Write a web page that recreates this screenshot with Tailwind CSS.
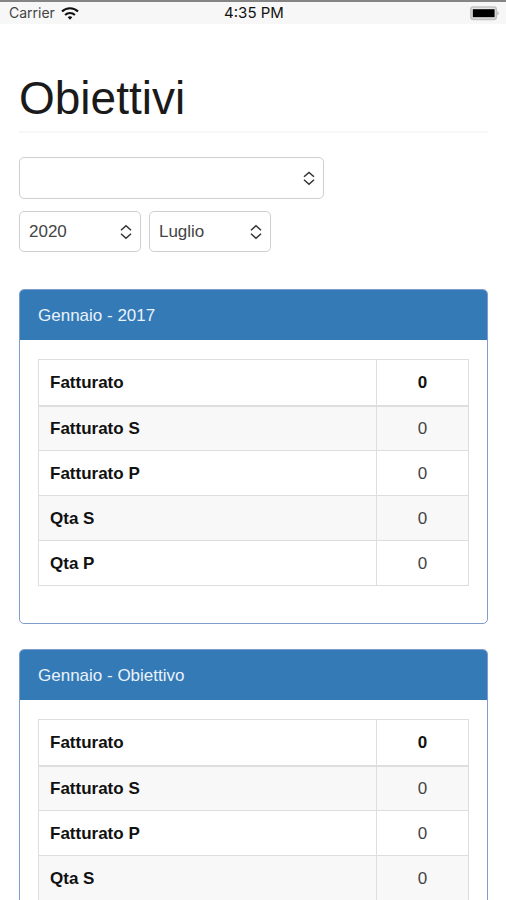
<!DOCTYPE html>
<html lang="it">
<head>
<meta charset="utf-8">
<meta name="viewport" content="width=device-width, initial-scale=1">
<title>Obiettivi</title>
<script src="https://cdn.jsdelivr.net/npm/@tailwindcss/browser@4"></script>
</head>
<body class="bg-white font-['Liberation_Sans',Arial,sans-serif] text-[17px] leading-6 text-[#222]">
<div class="grid h-6 grid-cols-3 items-center border-t-2 border-[#858585] bg-[#f7f7f7] pr-[7px] pl-[9px] font-[Inter,sans-serif] text-sm leading-5 text-[#444]">
  <div class="flex items-center gap-1.5">
    <span>Carrier</span>
    <svg class="h-[13px] w-[18px]" viewBox="0 0 18 13" fill="none" stroke="#111" stroke-width="2.1" aria-hidden="true">
      <path d="M1 4.6C5.4.1 12.6.1 17 4.6"/>
      <path d="M4.1 8C6.8 5.3 11.2 5.3 13.9 8"/>
      <path d="M6.7 10.2C8 8.9 10 8.9 11.3 10.2L9 12.7Z" fill="#111" stroke="none"/>
    </svg>
  </div>
  <div class="text-center text-[15px] leading-5 text-[#111]">4:35 PM</div>
  <svg class="h-[15px] w-[29px] justify-self-end" viewBox="0 0 29 15" aria-hidden="true">
    <rect x=".9" y="1" width="25.4" height="12.4" rx="2.5" fill="#e6e6e6" stroke="#c2c2c2" stroke-width="1.6"/>
    <path d="M27.2 4.8Q30.4 7.2 27.2 9.6Z" fill="#bdbdbd"/>
    <rect x="2.8" y="3.2" width="21.8" height="8" fill="#000"/>
  </svg>
</div>

<main class="pt-[49px] pr-[18px] pb-6 pl-[19px]">
  <h1 class="border-b-2 border-[#f7f7f7] pb-[7px] text-[46px] leading-[51px] text-[#1a1a1a]">Obiettivi</h1>

  <form class="mt-6 flex flex-col gap-3">
    <div class="relative w-[65%]">
      <select aria-label="Agente" class="block h-[42px] w-full appearance-none rounded-[5px] border border-[#cfcfcf] bg-white pr-8 pl-[9px] text-[#444]"><option></option></select>
      <svg class="pointer-events-none absolute top-3 right-2 h-[18px] w-[14px]" viewBox="0 0 14 18" fill="none" stroke="#333" stroke-width="1.5" aria-hidden="true"><path d="M2 7.8 7 3.4l5 4.4M2 10.8l5 4.4 5-4.4"/></svg>
    </div>
    <div class="flex gap-2">
      <div class="relative w-[26%]">
        <select aria-label="Anno" class="block h-[41px] w-full appearance-none rounded-[5px] border border-[#cfcfcf] bg-white pr-8 pl-[9px] text-[#444]"><option>2020</option></select>
        <svg class="pointer-events-none absolute top-3 right-2 h-[18px] w-[14px]" viewBox="0 0 14 18" fill="none" stroke="#333" stroke-width="1.5" aria-hidden="true"><path d="M2 7.3 7 2.8l5 4.5M2 10.7l5 4.5 5-4.5"/></svg>
      </div>
      <div class="relative w-[26%]">
        <select aria-label="Mese" class="block h-[41px] w-full appearance-none rounded-[5px] border border-[#cfcfcf] bg-white pr-8 pl-[9px] text-[#444]"><option>Luglio</option></select>
        <svg class="pointer-events-none absolute top-3 right-2 h-[18px] w-[14px]" viewBox="0 0 14 18" fill="none" stroke="#333" stroke-width="1.5" aria-hidden="true"><path d="M2 7.3 7 2.8l5 4.5M2 10.7l5 4.5 5-4.5"/></svg>
      </div>
    </div>
  </form>

  <div class="mt-[37px] flex flex-col gap-[25px]">
    <section class="overflow-hidden rounded-[5px] border border-[#7f9dcb]">
      <h2 class="bg-[#337ab7] px-[18px] pt-[14px] pb-3 text-[#eaf2fb]">Gennaio - 2017</h2>
      <div class="px-[18px] pt-[19px] pb-[37px]">
        <table class="w-full table-fixed border-collapse">
          <colgroup><col><col class="w-[92px]"></colgroup>
          <thead>
            <tr class="h-[46px] text-[#111]"><th scope="col" class="border border-b-2 border-[#dedede] px-[11px] pt-0.5 text-left">Fatturato</th><th scope="col" class="border border-b-2 border-[#dedede] pt-0.5">0</th></tr>
          </thead>
          <tbody>
            <tr class="h-[45px] bg-[#f8f8f8]"><th scope="row" class="border border-[#dedede] px-[11px] pt-0.5 text-left text-[#111]">Fatturato S</th><td class="border border-[#dedede] pt-0.5 text-center text-[#444]">0</td></tr>
            <tr class="h-[45px]"><th scope="row" class="border border-[#dedede] px-[11px] pt-0.5 text-left text-[#111]">Fatturato P</th><td class="border border-[#dedede] pt-0.5 text-center text-[#444]">0</td></tr>
            <tr class="h-[45px] bg-[#f8f8f8]"><th scope="row" class="border border-[#dedede] px-[11px] pt-0.5 text-left text-[#111]">Qta S</th><td class="border border-[#dedede] pt-0.5 text-center text-[#444]">0</td></tr>
            <tr class="h-[45px]"><th scope="row" class="border border-[#dedede] px-[11px] pt-0.5 text-left text-[#111]">Qta P</th><td class="border border-[#dedede] pt-0.5 text-center text-[#444]">0</td></tr>
          </tbody>
        </table>
      </div>
    </section>

    <section class="overflow-hidden rounded-[5px] border border-[#7f9dcb]">
      <h2 class="bg-[#337ab7] px-[18px] pt-[14px] pb-3 text-[#eaf2fb]">Gennaio - Obiettivo</h2>
      <div class="px-[18px] pt-[19px] pb-[37px]">
        <table class="w-full table-fixed border-collapse">
          <colgroup><col><col class="w-[92px]"></colgroup>
          <thead>
            <tr class="h-[46px] text-[#111]"><th scope="col" class="border border-b-2 border-[#dedede] px-[11px] pt-0.5 text-left">Fatturato</th><th scope="col" class="border border-b-2 border-[#dedede] pt-0.5">0</th></tr>
          </thead>
          <tbody>
            <tr class="h-[45px] bg-[#f8f8f8]"><th scope="row" class="border border-[#dedede] px-[11px] pt-0.5 text-left text-[#111]">Fatturato S</th><td class="border border-[#dedede] pt-0.5 text-center text-[#444]">0</td></tr>
            <tr class="h-[45px]"><th scope="row" class="border border-[#dedede] px-[11px] pt-0.5 text-left text-[#111]">Fatturato P</th><td class="border border-[#dedede] pt-0.5 text-center text-[#444]">0</td></tr>
            <tr class="h-[45px] bg-[#f8f8f8]"><th scope="row" class="border border-[#dedede] px-[11px] pt-0.5 text-left text-[#111]">Qta S</th><td class="border border-[#dedede] pt-0.5 text-center text-[#444]">0</td></tr>
            <tr class="h-[45px]"><th scope="row" class="border border-[#dedede] px-[11px] pt-0.5 text-left text-[#111]">Qta P</th><td class="border border-[#dedede] pt-0.5 text-center text-[#444]">0</td></tr>
          </tbody>
        </table>
      </div>
    </section>
  </div>
</main>
</body>
</html>
